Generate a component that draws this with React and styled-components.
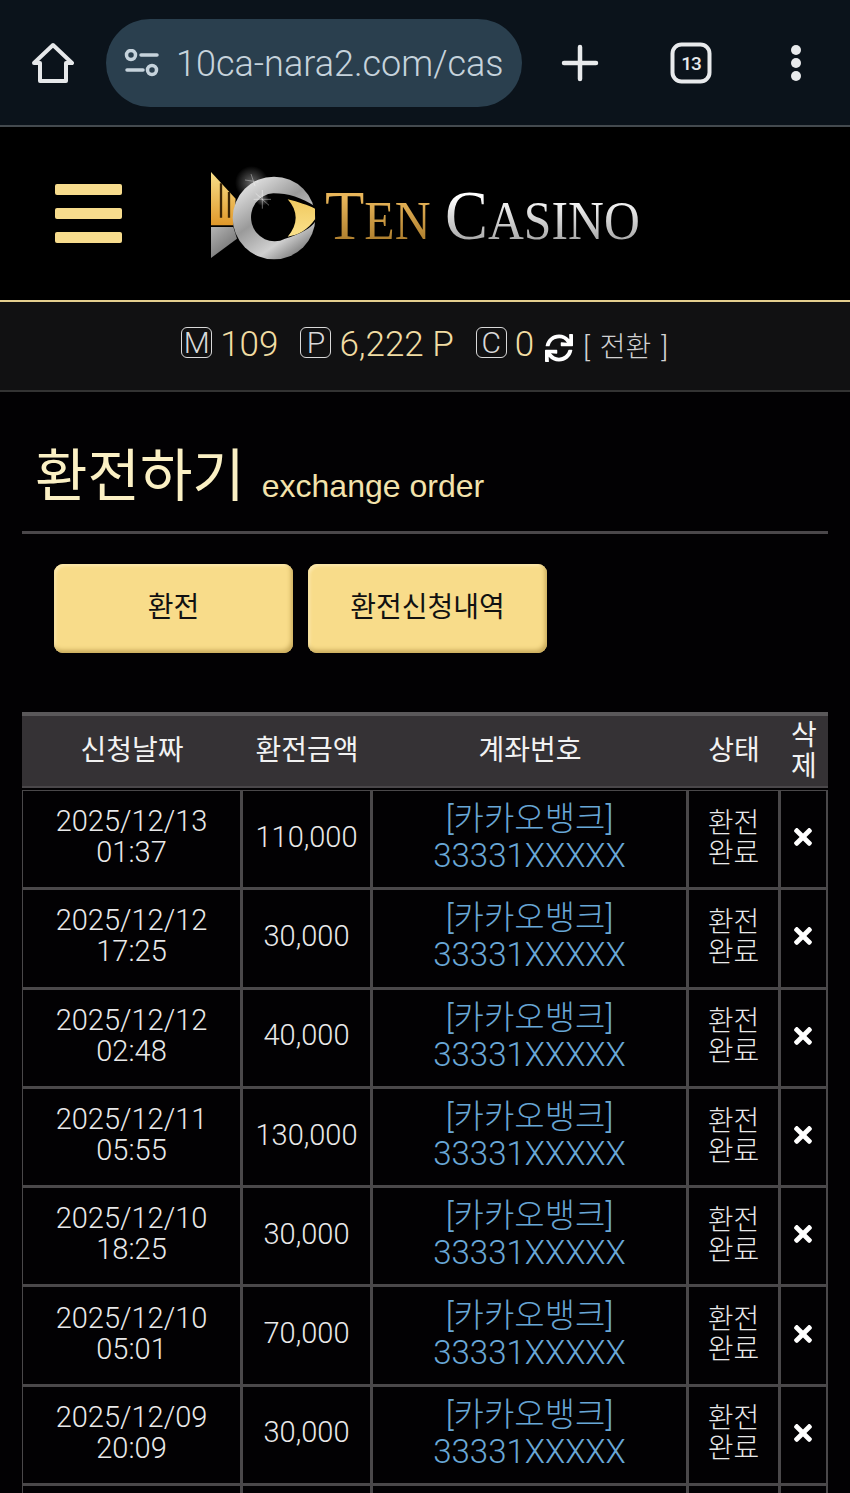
import React from 'react';
import styled, { createGlobalStyle } from 'styled-components';
import { FaSync, FaTimes } from 'react-icons/fa';

const GlobalStyle = createGlobalStyle`
  html, body {
    margin: 0;
    height: 1493px;
    overflow: hidden;
    background: #000;
    font-family: Roboto, "Noto Sans CJK KR", sans-serif;
  }
`
const Page = styled.div`
  width: 850px;
  height: 1493px;
  overflow: hidden;
  background: #020103;
`
const BrowserBar = styled.div`
  height: 125px;
  display: flex;
  align-items: center;
  background: #0b131b;
  border-bottom: 2px solid #444a4f;
  padding-left: 32px;
`
const BarIcon = styled.svg`
  display: block;
  flex: none;
  margin-left: ${ props => props.left || 0 }px;
`
const UrlPill = styled.div`
  width: 416px;
  height: 88px;
  margin-left: 32px;
  border-radius: 44px;
  background: #2a3f4e;
  display: flex;
  align-items: center;
  padding-left: 18px;
  box-sizing: border-box;
  color: #c6d3dc;
`
const UrlText = styled.span`
  font-size: 36px;
  font-weight: 300;
  margin-left: 16px;
  margin-top: 2px;
  white-space: nowrap;
`
const LogoHeader = styled.div`
  height: 173px;
  background: #000;
  border-bottom: 2px solid #e4cf8e;
  display: flex;
  align-items: center;
  padding-left: 55px;
`
const Burger = styled.div`
  width: 67px;
  display: flex;
  flex-direction: column;
  gap: 13px;
  margin-top: -1px;

  > i {
    display: block;
    height: 11px;
    border-radius: 2px;
    background: #f7dc8d;
  }
`
const Logo = styled.div`
  display: flex;
  align-items: center;
  margin-left: 83px;
  margin-top: 4px;
`
const LogoWord = styled.span`
  display: inline-block;
  font-family: "Liberation Serif", serif;
  font-size: 54px;
  line-height: 80px;
  white-space: nowrap;
  transform: scaleX(0.92);
  transform-origin: left center;
  margin-left: ${ props => props.left || 0 }px;
  margin-right: ${ props => props.right || 0 }px;
  margin-top: 6px;
  background: ${ props => props.gold
    ? 'linear-gradient(180deg, #e9b65a 25%, #a97a2a 80%)'
    : 'linear-gradient(180deg, #ffffff 25%, #a2a2a2 80%)' };
  -webkit-background-clip: text;
  background-clip: text;
  color: transparent;
`
const BigCap = styled.span`
  font-size: 70px;
`
const StatusBar = styled.div`
  height: 90px;
  background: #111112;
  border-bottom: 2px solid #333;
  display: flex;
  align-items: center;
  justify-content: center;
  padding-right: 1px;
  padding-bottom: 3px;
  box-sizing: border-box;
  color: #f1dda3;
`
const Badge = styled.span`
  width: 29px;
  height: 29px;
  border: 1.5px solid #d9d9d9;
  border-radius: 6px;
  display: inline-flex;
  align-items: center;
  justify-content: center;
  font-size: 30px;
  font-weight: 300;
  color: #d9d9d9;
  margin-left: ${ props => props.left || 0 }px;
  margin-top: -4px;
`
const Amount = styled.span`
  font-size: 35px;
  font-weight: 300;
  margin-left: ${ props => props.left || 8 }px;
  white-space: nowrap;
`
const Swap = styled.span`
  display: flex;
  color: #fff;
  font-size: 28px;
  margin-left: 11px;
  margin-top: 6px;
`
const SwapText = styled.span`
  color: #d2d2d2;
  font-size: 28px;
  font-weight: 300;
  margin-left: 10px;
  word-spacing: 3px;
  white-space: nowrap;
`
const TitleRow = styled.div`
  margin: 0 22px;
  height: 139px;
  border-bottom: 3px solid #4a474a;
  display: flex;
  align-items: flex-end;
  padding-left: 13px;
  color: #fbf0c4;
`
const Title = styled.h1`
  margin: 0 0 18px;
  font-size: 57px;
  line-height: 72px;
  font-weight: 400;
`
const SubTitle = styled.span`
  font-family: "Liberation Sans", sans-serif;
  font-size: 32px;
  line-height: 40px;
  color: #f3e3ac;
  margin: 0 0 25px 17px;
`
const ButtonRow = styled.div`
  display: flex;
  gap: 15px;
  padding: 30px 0 0 54px;
`
const TabButton = styled.div`
  width: 239px;
  height: 89px;
  border-radius: 9px;
  background: #f8dc8a;
  box-shadow: inset -2px -3px 4px #c9ab5c, inset 2px 2px 3px #fdeab0;
  display: flex;
  align-items: center;
  justify-content: center;
  padding-bottom: 8px;
  box-sizing: border-box;
  color: #111;
  font-size: 28px;
`
const Table = styled.div`
  margin: 59px 22px 0;
  width: 806px;
`
const Row = styled.div`
  display: grid;
  grid-template-columns: 220px 130px 316px 92px 48px;
`
const HeadRow = styled(Row)`
  height: 76px;
  margin-bottom: 2px;
  box-sizing: border-box;
  background: #353235;
  border-top: 4px solid #5a585a;
  border-bottom: 2px solid #4a474a;
  color: #f2f2f2;
  font-size: 28px;
`
const HeadCell = styled.div`
  display: flex;
  align-items: center;
  justify-content: center;
  text-align: center;
  padding-bottom: ${ props => props.tight ? 0 : 6 }px;
  line-height: ${ props => props.tight ? '31px' : 'normal' };
`
const BodyRow = styled(Row)`
  height: 99.3px;
  box-sizing: border-box;
`
const Cell = styled.div`
  display: flex;
  flex-direction: column;
  align-items: center;
  justify-content: center;
  text-align: center;
  box-sizing: border-box;
  color: ${ props => props.blue ? '#69a7d6' : '#e9e9e9' };
  font-size: ${ props => props.blue ? '33px' : props.small ? '28px' : '29px' };
  font-weight: 300;
  line-height: ${ props => props.blue ? '37px' : props.small ? '30px' : '31px' };
  padding-bottom: ${ props => props.small ? 1 : 4 }px;
  padding-right: ${ props => props.icon ? 2 : 0 }px;
  border: 1px solid #4a484a;
  border-width: 1px 2px 2px 1px;
  white-space: nowrap;
`

const rows = [
  ['2025/12/13', '01:37', '110,000'],
  ['2025/12/12', '17:25', '30,000'],
  ['2025/12/12', '02:48', '40,000'],
  ['2025/12/11', '05:55', '130,000'],
  ['2025/12/10', '18:25', '30,000'],
  ['2025/12/10', '05:01', '70,000'],
  ['2025/12/09', '20:09', '30,000'],
];

function LogoMark() {
  return (
    <svg width="120" height="100" viewBox="0 0 360 300" style={{ display: 'block', flex: 'none' }}>
      <defs>
        <linearGradient id="ring" x1="0.1" y1="0" x2="0.8" y2="1">
          <stop offset="0" stopColor="#f2f2f2" />
          <stop offset="0.45" stopColor="#9a9a9a" />
          <stop offset="0.75" stopColor="#d0d0d0" />
          <stop offset="1" stopColor="#6e6e6e" />
        </linearGradient>
        <linearGradient id="bars" x1="0" y1="0" x2="0" y2="1">
          <stop offset="0" stopColor="#f9e08a" />
          <stop offset="1" stopColor="#e0982a" />
        </linearGradient>
        <linearGradient id="lower" x1="0" y1="0" x2="0.7" y2="1">
          <stop offset="0" stopColor="#b4b4b4" />
          <stop offset="1" stopColor="#6c6c6c" />
        </linearGradient>
        <linearGradient id="eye" x1="0" y1="0" x2="0" y2="1">
          <stop offset="0" stopColor="#f0c95f" />
          <stop offset="1" stopColor="#fbe28c" />
        </linearGradient>
        <radialGradient id="flare">
          <stop offset="0" stopColor="#fff" stopOpacity="0.4" />
          <stop offset="1" stopColor="#fff" stopOpacity="0" />
        </radialGradient>
      </defs>
      <circle cx="140" cy="50" r="50" fill="url(#flare)" />
      <path d="M18 18 L92 98 L85 178 L18 178Z" fill="url(#bars)" />
      <path d="M48 52 V155 M72 78 V155" stroke="#3a2405" strokeWidth="7" />
      <path d="M18 183 L85 183 L96 218 L18 276Z" fill="url(#lower)" />
      <circle cx="207" cy="156" r="124" fill="url(#ring)" />
      <path d="M332 122 C290 95 250 82 205 82 A70 72 0 1 0 240 218 C285 205 320 185 332 165Z" fill="#000" />
      <path d="M248 100 C280 108 310 118 330 128 L330 160 C310 190 280 208 248 212 C280 175 280 135 248 100Z" fill="url(#eye)" />
      <circle cx="172" cy="100" r="20" fill="url(#flare)" />
      <path d="M172 72 V128 M146 100 H198 M152 82 L192 118" stroke="#fff" strokeWidth="1.5" opacity="0.8" />
      <path d="M138 24 L150 60 M120 42 L160 48" stroke="#fff" strokeWidth="1.5" opacity="0.7" />
    </svg>
  );
}

export default function App() {
  return (
    <Page>
      <GlobalStyle />
      <BrowserBar>
        <BarIcon width="42" height="42" viewBox="0 0 42 42" fill="none" stroke="#e6e8ea" strokeWidth="4" strokeLinejoin="round">
          <path d="M2 21 L21 3 L40 21 H34 V39 H8 V21Z" />
        </BarIcon>
        <UrlPill>
          <BarIcon width="36" height="28" viewBox="0 0 36 28" fill="none" stroke="#c6d3dc" strokeWidth="3.5" strokeLinecap="round">
            <circle cx="7" cy="6" r="4.5" />
            <path d="M17 6 H33 M3 21 H19" />
            <circle cx="28" cy="21" r="4.5" />
          </BarIcon>
          <UrlText>10ca-nara2.com/cas</UrlText>
        </UrlPill>
        <BarIcon left={39} width="38" height="38" viewBox="0 0 38 38" stroke="#e8eaec" strokeWidth="4.5" strokeLinecap="round">
          <path d="M19 3 V35 M3 19 H35" />
        </BarIcon>
        <BarIcon left={71} width="42" height="42" viewBox="0 0 42 42" fill="none">
          <rect x="2.5" y="2.5" width="37" height="37" rx="9" stroke="#e8eaec" strokeWidth="4" />
          <text x="21" y="28" textAnchor="middle" fontSize="19" fontWeight="500" fontFamily="Roboto" letterSpacing="-1" fill="#e8eaec">13</text>
        </BarIcon>
        <BarIcon left={78} width="12" height="38" viewBox="0 0 12 38" fill="#e8eaec">
          <circle cx="6" cy="6" r="5" />
          <circle cx="6" cy="19" r="5" />
          <circle cx="6" cy="32" r="5" />
        </BarIcon>
      </BrowserBar>

      <LogoHeader>
        <Burger><i /><i /><i /></Burger>
        <Logo>
          <LogoMark />
          <LogoWord gold right={-9}><BigCap>T</BigCap>EN</LogoWord>
          <LogoWord left={14}><BigCap>C</BigCap>ASINO</LogoWord>
        </Logo>
      </LogoHeader>

      <StatusBar>
        <Badge>M</Badge>
        <Amount>109</Amount>
        <Badge left={22}>P</Badge>
        <Amount>6,222 P</Amount>
        <Badge left={22}>C</Badge>
        <Amount>0</Amount>
        <Swap><FaSync /></Swap>
        <SwapText>[ 전환 ]</SwapText>
      </StatusBar>

      <TitleRow>
        <Title>환전하기</Title>
        <SubTitle>exchange order</SubTitle>
      </TitleRow>

      <ButtonRow>
        <TabButton>환전</TabButton>
        <TabButton>환전신청내역</TabButton>
      </ButtonRow>

      <Table>
        <HeadRow>
          <HeadCell>신청날짜</HeadCell>
          <HeadCell>환전금액</HeadCell>
          <HeadCell>계좌번호</HeadCell>
          <HeadCell>상태</HeadCell>
          <HeadCell tight>삭<br />제</HeadCell>
        </HeadRow>
        {rows.map((row, i) => (
          <BodyRow key={i}>
            <Cell><span>{row[0]}</span><span>{row[1]}</span></Cell>
            <Cell>{row[2]}</Cell>
            <Cell blue><span>[카카오뱅크]</span><span>33331XXXXX</span></Cell>
            <Cell small><span>환전</span><span>완료</span></Cell>
            <Cell icon><FaTimes color="#fff" size={26} /></Cell>
          </BodyRow>
        ))}
        {/* next row only shows its top edge in the window */}
        <BodyRow>
          <Cell /><Cell /><Cell /><Cell /><Cell />
        </BodyRow>
      </Table>
    </Page>
  );
}
